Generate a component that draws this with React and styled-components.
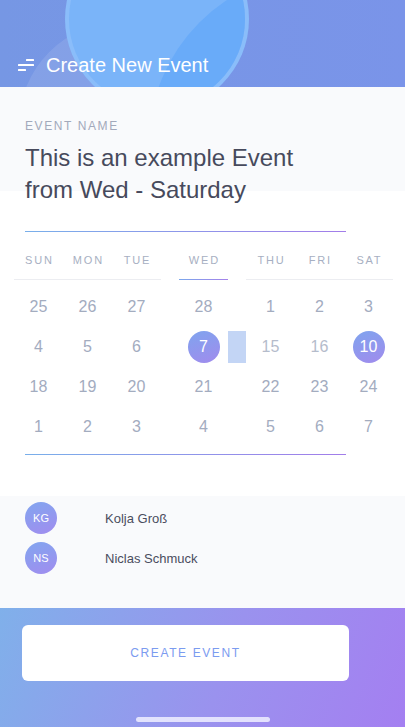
import React from "react";
import styled, { createGlobalStyle } from "styled-components";

const GlobalStyle = createGlobalStyle`
  html, body {
    margin: 0;
    padding: 0;
    background: #ffffff;
  }
  body {
    font-family: "Liberation Sans", Arial, sans-serif;
  }
`;

const Screen = styled.div`
  width: 405px;
  height: 727px;
  display: flex;
  flex-direction: column;
  overflow: hidden;
  background: #ffffff;
`;

const Header = styled.header`
  position: relative;
  height: 87px;
  flex-shrink: 0;
  overflow: hidden;
  background: linear-gradient(90deg, #7697e4 0%, #7a94e9 100%);
  display: flex;
  align-items: flex-end;
  padding: 0 0 10px 18px;
  box-sizing: border-box;
`;

const Blob = styled.div`
  position: absolute;
  border-radius: 50%;
  overflow: hidden;
`;

const SoftBlob = styled(Blob)`
  left: 19px;
  top: 22px;
  width: 206px;
  height: 206px;
  background: rgba(255, 255, 255, 0.1);
`;

const MainBlob = styled(Blob)`
  left: 65px;
  top: -73px;
  width: 184px;
  height: 184px;
  background: #7ab4f9;
  border: 4px solid rgba(140, 190, 250, 0.9);
  box-sizing: border-box;
`;

const InnerBlob = styled.div`
  position: absolute;
  left: 80px;
  top: 41px;
  width: 344px;
  height: 344px;
  border-radius: 50%;
  background: #69abf9;
`;

const HeaderContent = styled.div`
  position: relative;
  display: flex;
  align-items: center;
  gap: 12px;
`;

const HeaderTitle = styled.h1`
  margin: 0;
  color: #ffffff;
  font-size: 20px;
  font-weight: 400;
  line-height: 24px;
`;

const MenuIcon = () => (
  <svg width="16" height="14" viewBox="0 0 16 14">
    <rect x="8" y="1" width="8" height="2" rx="0.5" fill="#fff" />
    <rect x="0" y="6" width="16" height="2" rx="0.5" fill="#fff" />
    <rect x="0" y="11" width="8" height="2" rx="0.5" fill="#fff" />
  </svg>
);

const NamePanel = styled.section`
  height: 104px;
  flex-shrink: 0;
  background: #f9fafc;
  padding: 32px 25px 0;
  box-sizing: border-box;
`;

const Label = styled.div`
  font-size: 12px;
  line-height: 14px;
  letter-spacing: 1.6px;
  color: #a2a9bb;
  text-transform: uppercase;
`;

const EventTitle = styled.div`
  margin-top: 9px;
  max-width: 300px;
  font-size: 24px;
  line-height: 32px;
  color: #474a5c;
`;

const GradientLine = styled.div`
  margin-left: 25px;
  width: 321px;
  height: 1px;
  background: linear-gradient(90deg, #79afea 0%, #a27de9 100%);
  margin-top: ${(p) => p.$top}px;
  flex-shrink: 0;
`;

const Calendar = styled.div`
  display: flex;
  margin: 12px 0 0 14px;
`;

const Group = styled.div`
  display: flex;
  flex-direction: column;
`;

const DayHeads = styled.div`
  display: flex;
  height: 35px;
  border-bottom: 1px solid ${(p) => (p.$active ? "transparent" : "#ecedf1")};
  border-image: ${(p) =>
    p.$active ? "linear-gradient(90deg, #7aa8ec, #a682ea) 1" : "none"};
  margin-bottom: 7px;
`;

const DayHead = styled.div`
  width: 49px;
  display: flex;
  align-items: center;
  justify-content: center;
  padding-bottom: 4px;
  box-sizing: border-box;
  font-size: 11px;
  letter-spacing: 1.8px;
  text-indent: 1.8px;
  color: #a7afc2;
`;

const Week = styled.div`
  display: flex;
  height: 40px;
`;

const DateCell = styled.div`
  width: 49px;
  display: flex;
  align-items: center;
  justify-content: center;
`;

const DateNum = styled.span`
  font-size: 16px;
  color: #a3acbf;
  opacity: ${(p) => (p.$faded ? 0.8 : 1)};
`;

const Selected = styled.span`
  width: 32px;
  height: 32px;
  border-radius: 50%;
  background: linear-gradient(160deg, #7fa4ee 0%, #a18bed 100%);
  color: #ffffff;
  font-size: 16px;
  display: flex;
  align-items: center;
  justify-content: center;
`;

const Spacer = styled.div`
  width: 18px;
  display: flex;
  flex-direction: column;
  padding-top: 43px;
`;

const SpacerRow = styled.div`
  height: 40px;
  display: flex;
  align-items: center;
`;

const RangeBar = styled.div`
  width: 18px;
  height: 32px;
  background: #c3d5f5;
`;

const People = styled.section`
  margin-top: 41px;
  height: 112px;
  flex-shrink: 0;
  background: #f9fafc;
  padding: 6px 25px 0;
  box-sizing: border-box;
  display: flex;
  flex-direction: column;
  gap: 8px;
`;

const Person = styled.div`
  display: flex;
  align-items: center;
  height: 32px;
`;

const Avatar = styled.div`
  width: 32px;
  height: 32px;
  border-radius: 50%;
  background: linear-gradient(160deg, #82a6ef 0%, #a18cef 100%);
  color: #ffffff;
  font-size: 11px;
  display: flex;
  align-items: center;
  justify-content: center;
  margin-right: 48px;
`;

const PersonName = styled.span`
  font-size: 13px;
  color: #4a4d5e;
`;

const Footer = styled.footer`
  flex: 1;
  background: linear-gradient(110deg, #80b0ea 0%, #9a92ee 55%, #a47ff1 100%);
  display: flex;
  flex-direction: column;
  align-items: flex-start;
  padding: 17px 0 0 22px;
  box-sizing: border-box;
`;

const Button = styled.button`
  width: 327px;
  height: 56px;
  border: none;
  border-radius: 6px;
  background: #ffffff;
  font-family: "Liberation Sans", Arial, sans-serif;
  font-size: 12px;
  letter-spacing: 1.6px;
  color: #7b9bf0;
  cursor: pointer;
`;

const HomeBar = styled.div`
  margin: 36px 0 0 114px;
  width: 134px;
  height: 5px;
  border-radius: 3px;
  background: rgba(240, 240, 255, 0.85);
`;

const left = {
  heads: ["SUN", "MON", "TUE"],
  weeks: [
    [25, 26, 27],
    [4, 5, 6],
    [18, 19, 20],
    [1, 2, 3],
  ],
};
const mid = { heads: ["WED"], weeks: [[28], [7], [21], [4]] };
const right = {
  heads: ["THU", "FRI", "SAT"],
  weeks: [
    [1, 2, 3],
    [15, 16, 10],
    [22, 23, 24],
    [5, 6, 7],
  ],
};

const selectedKeys = ["mid-1-0", "right-1-2"];
const fadedKeys = ["right-1-0", "right-1-1"];

function DayGroup({ id, data, active }) {
  return (
    <Group>
      <DayHeads $active={active}>
        {data.heads.map((h) => (
          <DayHead key={h}>{h}</DayHead>
        ))}
      </DayHeads>
      {data.weeks.map((week, wi) => (
        <Week key={wi}>
          {week.map((d, di) => {
            const key = `${id}-${wi}-${di}`;
            return (
              <DateCell key={key}>
                {selectedKeys.includes(key) ? (
                  <Selected>{d}</Selected>
                ) : (
                  <DateNum $faded={fadedKeys.includes(key)}>{d}</DateNum>
                )}
              </DateCell>
            );
          })}
        </Week>
      ))}
    </Group>
  );
}

export default function App() {
  return (
    <>
      <GlobalStyle />
      <Screen>
        <Header>
          <SoftBlob />
          <MainBlob>
            <InnerBlob />
          </MainBlob>
          <HeaderContent>
            <MenuIcon />
            <HeaderTitle>Create New Event</HeaderTitle>
          </HeaderContent>
        </Header>

        <NamePanel>
          <Label>Event Name</Label>
          <EventTitle>This is an example Event from Wed - Saturday</EventTitle>
        </NamePanel>

        <GradientLine $top={40} />

        <Calendar>
          <DayGroup id="left" data={left} />
          <Spacer />
          <DayGroup id="mid" data={mid} active />
          <Spacer>
            <SpacerRow />
            <SpacerRow>
              <RangeBar />
            </SpacerRow>
          </Spacer>
          <DayGroup id="right" data={right} />
        </Calendar>

        <GradientLine $top={7} />

        <People>
          <Person>
            <Avatar>KG</Avatar>
            <PersonName>Kolja Groß</PersonName>
          </Person>
          <Person>
            <Avatar>NS</Avatar>
            <PersonName>Niclas Schmuck</PersonName>
          </Person>
        </People>

        <Footer>
          <Button>CREATE EVENT</Button>
          <HomeBar />
        </Footer>
      </Screen>
    </>
  );
}
